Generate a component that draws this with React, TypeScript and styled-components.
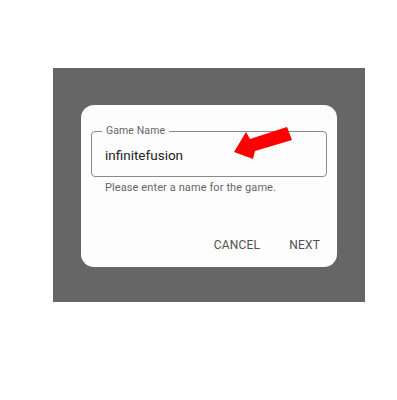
import React from 'react';
import styled, { createGlobalStyle } from 'styled-components';

const GlobalStyle = createGlobalStyle`
  body {
    margin: 0;
    background: #ffffff;
    font-family: Roboto, "Liberation Sans", sans-serif;
  }
`;

const Page = styled.div`
  width: 397px;
  height: 400px;
  padding: 68px 0 0 53px;
  box-sizing: border-box;
`;

const Scrim = styled.div`
  width: 312px;
  height: 234px;
  background: #666666;
  padding: 37px 0 0 28px;
  box-sizing: border-box;
`;

const Dialog = styled.div`
  width: 256px;
  height: 162px;
  background: #fdfdfd;
  border-radius: 13px;
  padding: 26px 10px 0 10px;
  box-sizing: border-box;
  display: flex;
  flex-direction: column;
`;

const Field = styled.div`
  position: relative;
  height: 46px;
  border: 1px solid #8a8a8a;
  border-radius: 4px;
  box-sizing: border-box;
  display: flex;
  align-items: center;
  padding: 0 13px;
`;

const FieldLabel = styled.span`
  position: absolute;
  top: -7px;
  left: 10px;
  padding: 0 4px;
  background: #fdfdfd;
  font-size: 10.5px;
  line-height: 12px;
  color: #666666;
  letter-spacing: 0.1px;
`;

const FieldValue = styled.span`
  font-size: 13.5px;
  color: #222222;
  margin-top: 2px;
`;

const Arrow = styled.svg`
  position: absolute;
  left: 142px;
  top: -5px;
`;

const Helper = styled.div`
  font-size: 11px;
  color: #666666;
  padding: 4px 0 0 14px;
  letter-spacing: 0.1px;
`;

const Actions = styled.div`
  display: flex;
  justify-content: flex-end;
  gap: 29px;
  margin-top: 44px;
  padding-right: 7px;
`;

const ActionButton = styled.button`
  background: none;
  border: none;
  padding: 0;
  font-family: Roboto, "Liberation Sans", sans-serif;
  font-size: 12px;
  font-weight: 400;
  color: #505050;
  letter-spacing: 0.2px;
`;

export default function App() {
  return (
    <>
      <GlobalStyle />
      <Page>
        <Scrim>
          <Dialog>
            <Field>
              <FieldLabel>Game Name</FieldLabel>
              <FieldValue>infinitefusion</FieldValue>
              <Arrow width="60" height="34" viewBox="0 0 60 34">
                <polygon
                  points="0,25 12,5 16,12 53,0 58,13 21,24 19,32"
                  fill="#ff0000"
                />
              </Arrow>
            </Field>
            <Helper>Please enter a name for the game.</Helper>
            <Actions>
              <ActionButton>CANCEL</ActionButton>
              <ActionButton>NEXT</ActionButton>
            </Actions>
          </Dialog>
        </Scrim>
      </Page>
    </>
  );
}
